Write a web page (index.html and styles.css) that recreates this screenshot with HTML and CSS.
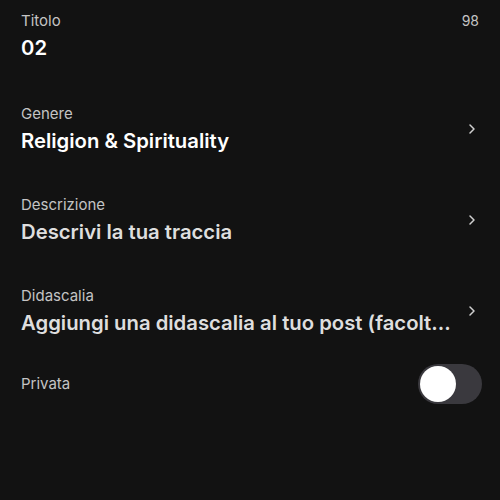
FILE: index.html
```html
<!DOCTYPE html>
<html lang="it">
<head>
<meta charset="utf-8">
<link rel="stylesheet" href="styles.css">
</head>
<body>
<main class="form">
  <section class="field">
    <div class="field-body">
      <div class="label-row">
        <span class="label">Titolo</span>
        <span class="counter">98</span>
      </div>
      <div class="value">02</div>
    </div>
  </section>

  <section class="field">
    <div class="field-body">
      <div class="label">Genere</div>
      <div class="value">Religion &amp; Spirituality</div>
    </div>
    <svg class="chev" viewBox="0 0 12 12" width="12" height="12"><path d="M4 2 L8 6 L4 10" fill="none" stroke="#d0d0d0" stroke-width="1.5" stroke-linecap="round" stroke-linejoin="round"/></svg>
  </section>

  <section class="field">
    <div class="field-body">
      <div class="label">Descrizione</div>
      <div class="value placeholder">Descrivi la tua traccia</div>
    </div>
    <svg class="chev" viewBox="0 0 12 12" width="12" height="12"><path d="M4 2 L8 6 L4 10" fill="none" stroke="#d0d0d0" stroke-width="1.5" stroke-linecap="round" stroke-linejoin="round"/></svg>
  </section>

  <section class="field last">
    <div class="field-body">
      <div class="label">Didascalia</div>
      <div class="value placeholder">Aggiungi una didascalia al tuo post (facolt...</div>
    </div>
    <svg class="chev" viewBox="0 0 12 12" width="12" height="12"><path d="M4 2 L8 6 L4 10" fill="none" stroke="#d0d0d0" stroke-width="1.5" stroke-linecap="round" stroke-linejoin="round"/></svg>
  </section>

  <section class="toggle-row">
    <span class="label">Privata</span>
    <span class="switch"><span class="knob"></span></span>
  </section>
</main>
</body>
</html>
```
FILE: styles.css
```css
* { box-sizing: border-box; }
html, body {
  margin: 0;
  padding: 0;
  background: #121212;
  width: 500px;
  height: 500px;
  overflow: hidden;
}
body {
  font-family: Inter, "Noto Sans", sans-serif;
  color: #ffffff;
}
.form {
  display: flex;
  flex-direction: column;
  padding: 11px 18px 0 21px;
}
.field {
  display: flex;
  align-items: center;
  margin-bottom: 41px;
}
.field:first-child {
  margin-bottom: 43px;
}
.field.last {
  margin-bottom: 28px;
}
.field-body {
  flex: 1;
  display: flex;
  flex-direction: column;
  gap: 4px;
  min-width: 0;
}
.label-row {
  display: flex;
  justify-content: space-between;
  align-items: center;
  padding-right: 3px;
}
.label {
  font-size: 15px;
  line-height: 20px;
  color: #c4c4c4;
}
.counter {
  font-size: 14px;
  line-height: 20px;
  color: #c4c4c4;
}
.value {
  font-size: 20.3px;
  line-height: 26px;
  font-weight: 600;
  color: #ffffff;
  white-space: nowrap;
}
.value.placeholder {
  color: #dedede;
}
.chev {
  flex: none;
  margin-left: 10px;
  margin-right: 4px;
}
.toggle-row {
  display: flex;
  justify-content: space-between;
  align-items: center;
}
.switch {
  width: 64px;
  height: 40px;
  border-radius: 20px;
  background: #3a393e;
  padding: 2px;
  display: flex;
  align-items: center;
}
.knob {
  width: 36px;
  height: 36px;
  border-radius: 50%;
  background: #ffffff;
}
```
